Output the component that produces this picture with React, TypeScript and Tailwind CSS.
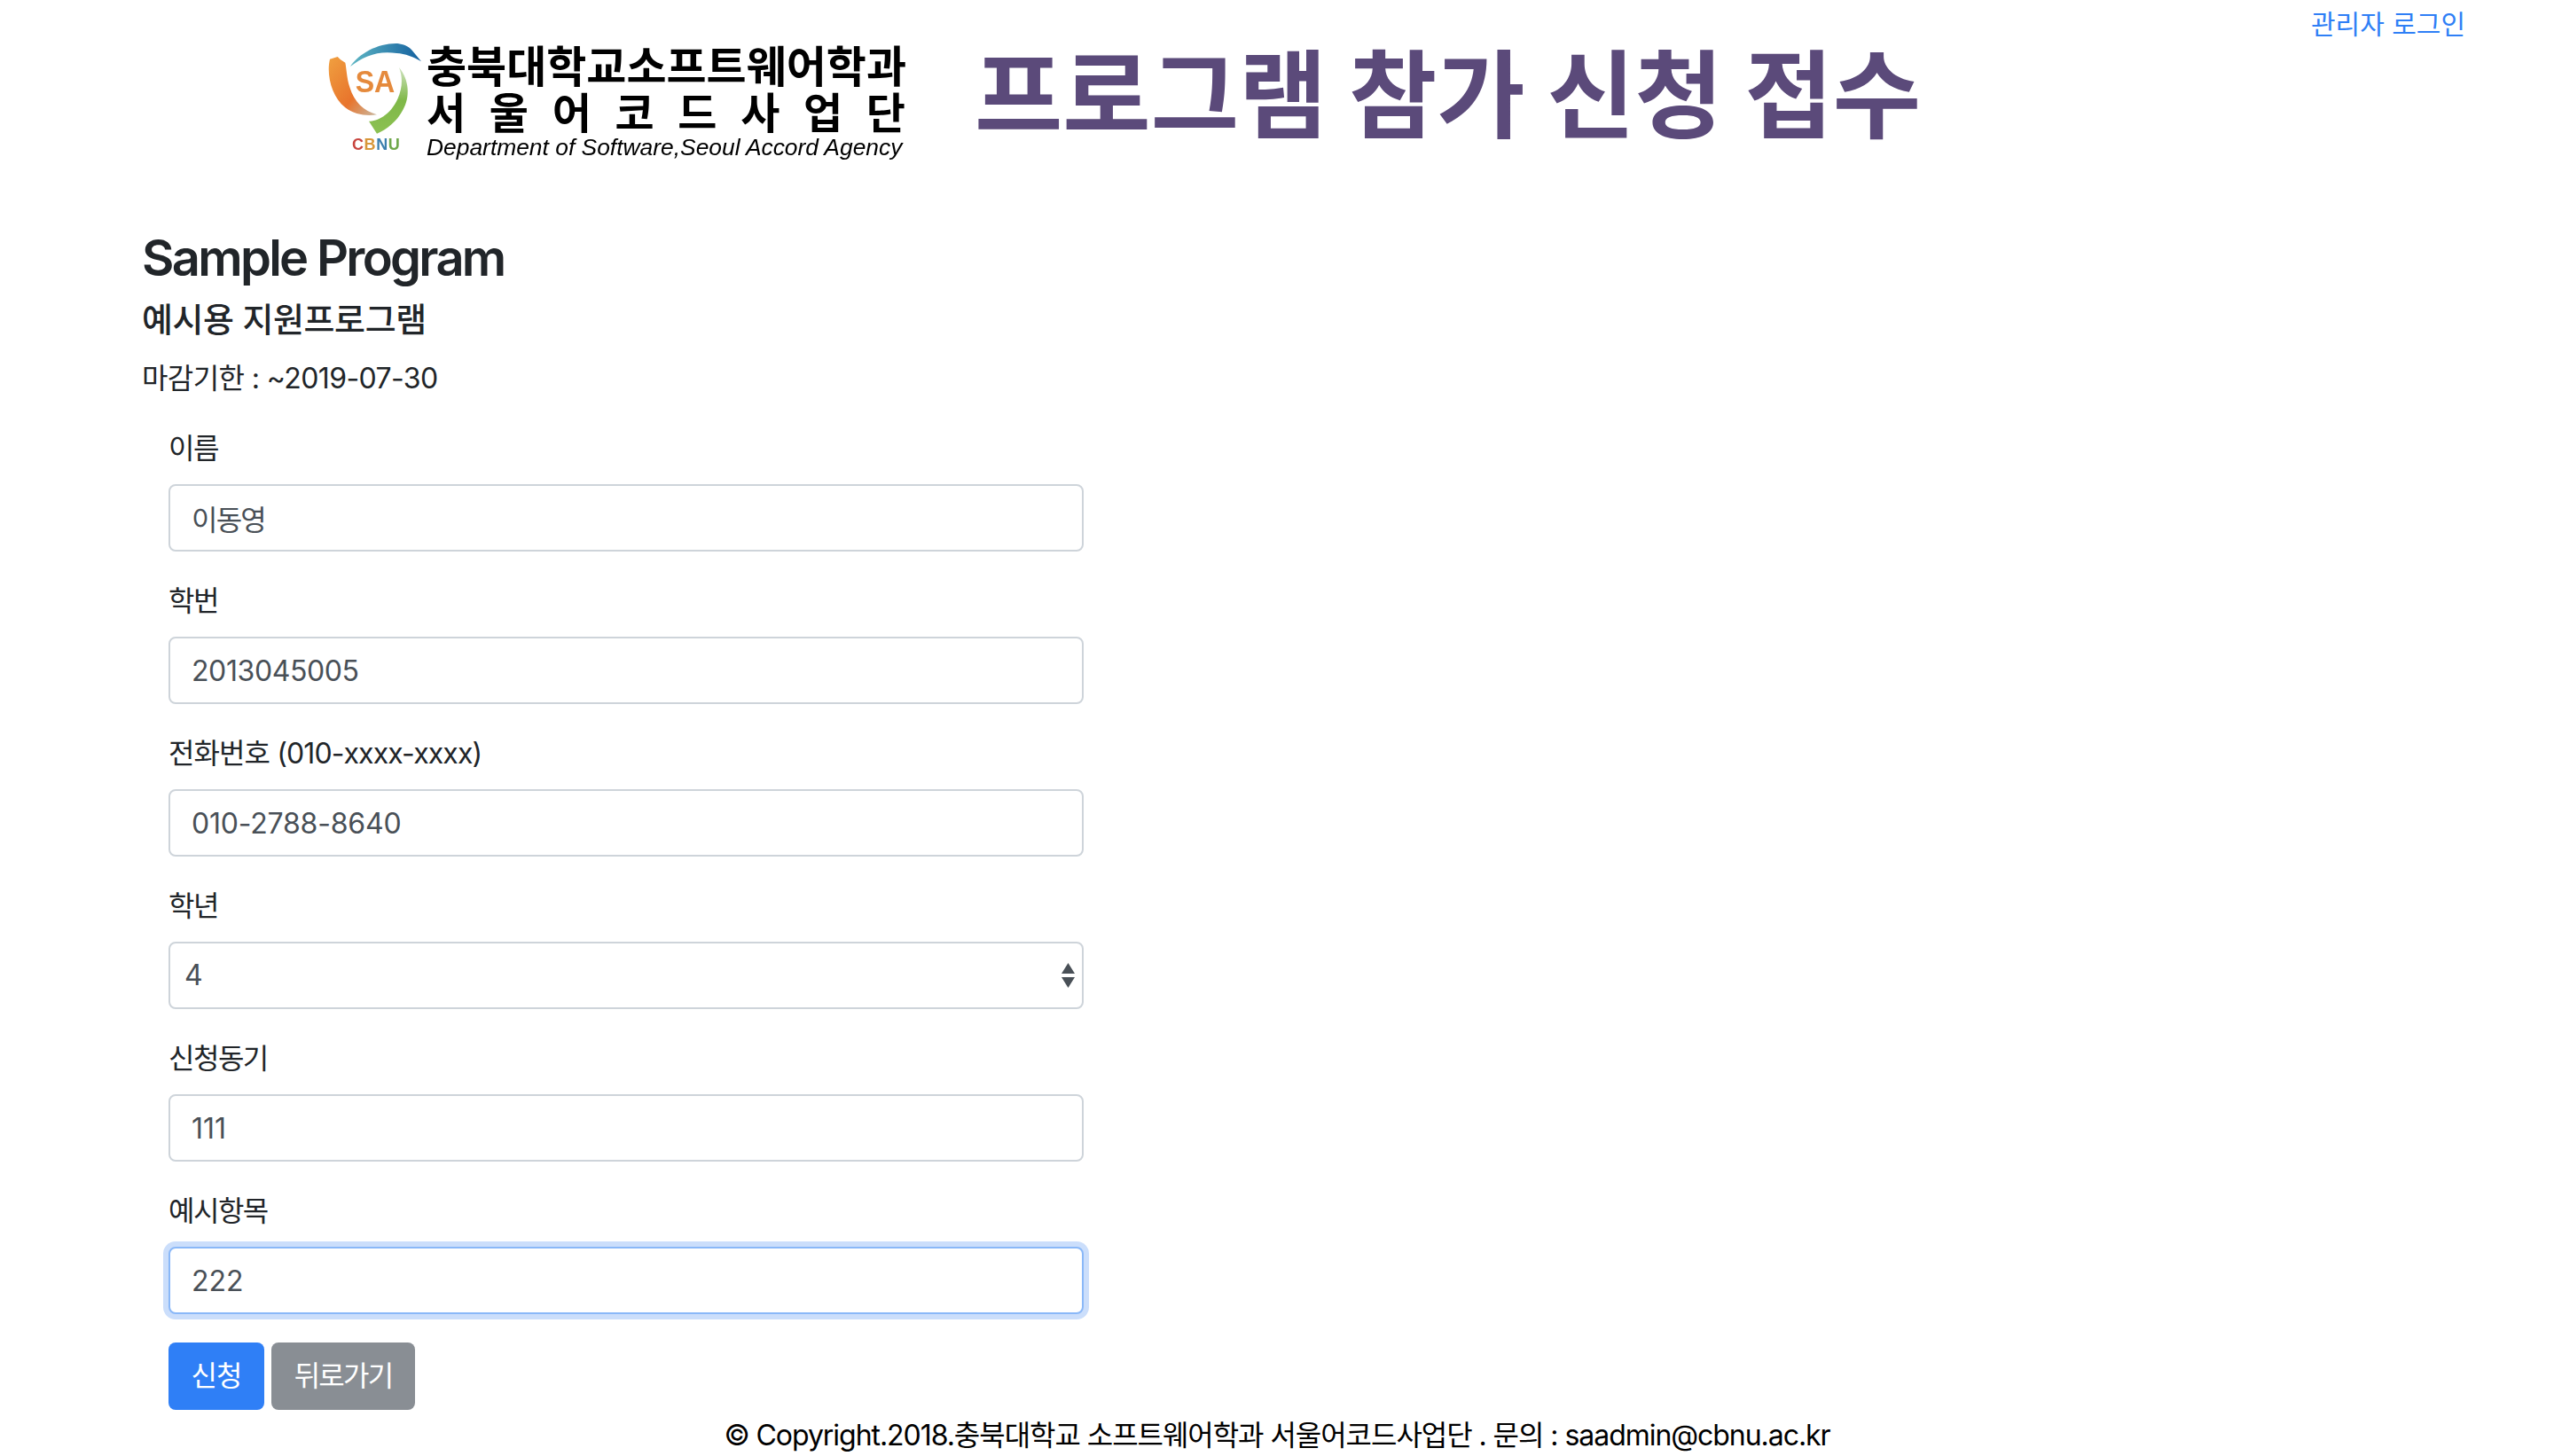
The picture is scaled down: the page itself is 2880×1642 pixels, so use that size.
import React from 'react';

const fields = [
  { label: '이름', value: '이동영', labelTrack: 'tracking-[-1.5px]', valueTrack: 'tracking-[-1.8px]' },
  { label: '학번', value: '2013045005', labelTrack: 'tracking-[-1.5px]', valueTrack: 'tracking-[-0.4px]' },
  { label: '전화번호 (010-xxxx-xxxx)', value: '010-2788-8640', labelTrack: 'tracking-[-0.9px]', valueTrack: 'tracking-[-0.2px]' },
];

function LogoMark() {
  return (
    <svg viewBox="0 0 390 420" className="w-[130px] h-[140px] shrink-0 mt-[-5px]">
      <defs>
        <linearGradient id="blueArc" x1="0" y1="0" x2="1" y2="0">
          <stop offset="0" stopColor="#5fb7c4" />
          <stop offset="1" stopColor="#14609f" />
        </linearGradient>
        <linearGradient id="orangeArc" x1="0" y1="0" x2="1" y2="1">
          <stop offset="0" stopColor="#f0a040" />
          <stop offset="0.6" stopColor="#e8742c" />
          <stop offset="1" stopColor="#c9b8a0" />
        </linearGradient>
        <linearGradient id="greenArc" x1="0" y1="0" x2="0" y2="1">
          <stop offset="0" stopColor="#cfe3c0" />
          <stop offset="0.5" stopColor="#7fb848" />
          <stop offset="1" stopColor="#8cc152" />
        </linearGradient>
      </defs>
      <path d="M105 105C135 60 200 25 265 27C285 30 300 35 312 48L345 88C320 72 290 62 262 60C200 50 150 70 105 105Z" fill="url(#blueArc)" />
      <path d="M62 72L36 80C24 130 40 205 88 244C120 268 160 274 195 268C150 255 118 225 103 175C93 145 92 110 88 92L72 82Z" fill="url(#orangeArc)" />
      <path d="M270 108C305 150 308 210 283 252C262 292 228 318 195 332L168 290C195 290 240 270 265 215C285 170 280 135 270 108Z" fill="url(#greenArc)" />
      <text x="122" y="192" textLength="134" lengthAdjust="spacingAndGlyphs" fontFamily="Liberation Sans" fontWeight="700" fontSize="104" fill="#e58a3c">SA</text>
    </svg>
  );
}

function Logo() {
  return (
    <div className="relative flex text-black blur-[0.5px]">
      <div className="w-[121px] shrink-0 relative">
        <LogoMark />
        <div className="absolute left-[37px] top-[106px] flex text-[18px] leading-[24px] font-bold font-['Liberation_Sans',sans-serif] tracking-[0.6px]">
          <span className="text-[#c8453f]">C</span>
          <span className="text-[#d8973a]">B</span>
          <span className="text-[#3c7fae]">N</span>
          <span className="text-[#6fa84a]">U</span>
        </div>
      </div>
      <div className="w-[540px] flex flex-col">
        <div className="text-[49px] leading-[54px] font-bold whitespace-nowrap mt-[4px]">충북대학교소프트웨어학과</div>
        <div className="flex justify-between text-[48px] leading-[50px] font-bold">
          {['서', '울', '어', '코', '드', '사', '업', '단'].map((c) => (
            <span key={c}>{c}</span>
          ))}
        </div>
        <div className="text-[26.4px] leading-[26px] italic font-medium whitespace-nowrap font-['Liberation_Sans',sans-serif]">
          Department of Software,Seoul Accord Agency
        </div>
      </div>
    </div>
  );
}

function App() {
  return (
    <div className="h-[1642px] overflow-hidden bg-white text-[32px] leading-[48px] text-[#212529] font-['Inter','Noto_Sans_CJK_KR',sans-serif]">
      {/* Header */}
      <div className="flex items-start h-[258px] pl-[360px] pt-[45px]">
        <Logo />
        <h1 className="ml-[78px] mt-[-20px] text-[108px] leading-[150px] font-bold text-[#5b4a7a] whitespace-nowrap font-['Noto_Sans_CJK_KR',sans-serif]">
          프로그램 참가 신청 접수
        </h1>
        <a className="ml-auto mr-[100px] mt-[-42px] text-[#2f7ff6] text-[30px]">관리자 로그인</a>
      </div>

      <div className="pl-[160px]">
        <h3 className="text-[56px] leading-[67px] font-semibold tracking-[-2.7px]">Sample Program</h3>
        <h5 className="mt-[11px] text-[38px] leading-[48px] font-medium tracking-[-0.4px]">예시용 지원프로그램</h5>
        <p className="mt-[19px] text-[32px] leading-[48px] tracking-[-0.6px]">마감기한 : ~2019-07-30</p>

        <form className="mt-[31px] pl-[30px] w-[1062px]">
          {fields.map((f) => (
            <div key={f.label} className="mb-[32px]">
              <label className={`block mb-[16px] ${f.labelTrack}`}>{f.label}</label>
              <input
                readOnly
                value={f.value}
                className={`block w-[1032px] h-[76px] px-[24px] border-2 border-[#ced4da] rounded-[8px] text-[#495057] bg-white outline-none ${f.valueTrack}`}
              />
            </div>
          ))}
          <div className="mb-[32px]">
            <label className="block mb-[16px] tracking-[-1.5px]">학년</label>
            <div className="relative w-[1032px]">
              <select
                defaultValue="4"
                className="block w-full h-[76px] pl-[16px] border-2 border-[#ced4da] rounded-[8px] text-[#495057] bg-white outline-none appearance-none"
              >
                <option>4</option>
              </select>
              <svg viewBox="0 0 15 28" className="absolute right-[10px] top-[24px] w-[15px] h-[28px] fill-[#495057]">
                <path d="M7.5 0L15 12H0Z" />
                <path d="M0 16H15L7.5 28Z" />
              </svg>
            </div>
          </div>
          <div className="mb-[32px]">
            <label className="block mb-[16px] tracking-[-1.5px]">신청동기</label>
            <input
              readOnly
              value="111"
              className="block w-[1032px] h-[76px] px-[24px] border-2 border-[#ced4da] rounded-[8px] text-[#495057] bg-white outline-none"
            />
          </div>
          <div className="mb-[32px]">
            <label className="block mb-[16px] tracking-[-1.5px]">예시항목</label>
            <input
              readOnly
              value="222"
              className="block w-[1032px] h-[76px] px-[24px] border-2 border-[#8ab8f8] rounded-[8px] text-[#495057] bg-white outline-none shadow-[0_0_0_6px_#cbdefb]"
            />
          </div>
          <div className="flex gap-[8px]">
            <button type="button" className="w-[108px] h-[76px] rounded-[8px] bg-[#2f7ff6] text-white tracking-[-1px]">신청</button>
            <button type="button" className="w-[162px] h-[76px] rounded-[8px] bg-[#898e94] text-white tracking-[-1.8px]">뒤로가기</button>
          </div>
        </form>
      </div>

      <footer className="mt-[5px] text-center text-black text-[32px] leading-[48px] tracking-[-1.05px]">
        © Copyright.2018.충북대학교 소프트웨어학과 서울어코드사업단 . 문의 : saadmin@cbnu.ac.kr
      </footer>
    </div>
  );
}

export default App;
